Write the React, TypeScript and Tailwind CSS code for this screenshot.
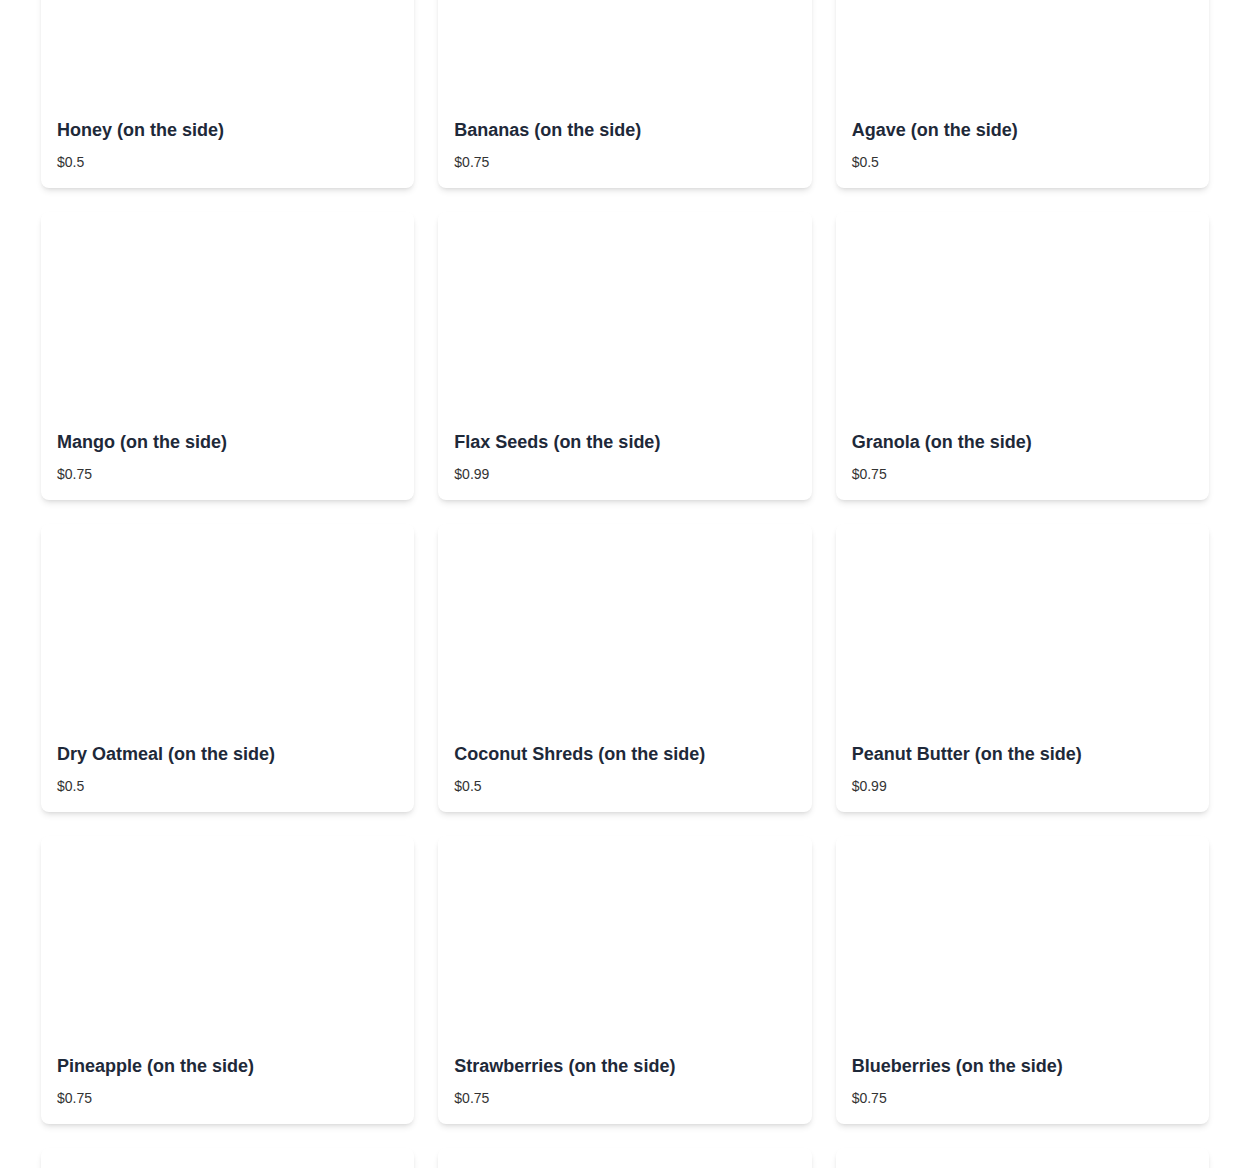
import React from 'react';

const items = [
  { name: 'Honey (on the side)', price: '$0.5' },
  { name: 'Bananas (on the side)', price: '$0.75' },
  { name: 'Agave (on the side)', price: '$0.5' },
  { name: 'Mango (on the side)', price: '$0.75' },
  { name: 'Flax Seeds (on the side)', price: '$0.99' },
  { name: 'Granola (on the side)', price: '$0.75' },
  { name: 'Dry Oatmeal (on the side)', price: '$0.5' },
  { name: 'Coconut Shreds (on the side)', price: '$0.5' },
  { name: 'Peanut Butter (on the side)', price: '$0.99' },
  { name: 'Pineapple (on the side)', price: '$0.75' },
  { name: 'Strawberries (on the side)', price: '$0.75' },
  { name: 'Blueberries (on the side)', price: '$0.75' },
];

export default function App() {
  return (
    <div className="h-[1168px] overflow-hidden bg-white" style={{ fontFamily: '"Liberation Sans", Arial, sans-serif' }}>
      <div className="px-[41px] -mt-[100px]">
        <div className="grid grid-cols-3 gap-6">
          {items.map((item) => (
            <div key={item.name} className="bg-white rounded-lg shadow-md overflow-hidden">
              <div className="h-[200px] bg-white" />
              <div className="p-4">
                <h3 className="text-lg leading-7 font-bold text-gray-800 mb-2">{item.name}</h3>
                <p className="text-sm leading-5 text-[#333]">{item.price}</p>
              </div>
            </div>
          ))}
          {/* next row, only its top edge shows */}
          {[0, 1, 2].map((i) => (
            <div key={i} className="bg-white rounded-lg shadow-md h-[288px]" />
          ))}
        </div>
      </div>
    </div>
  );
}
